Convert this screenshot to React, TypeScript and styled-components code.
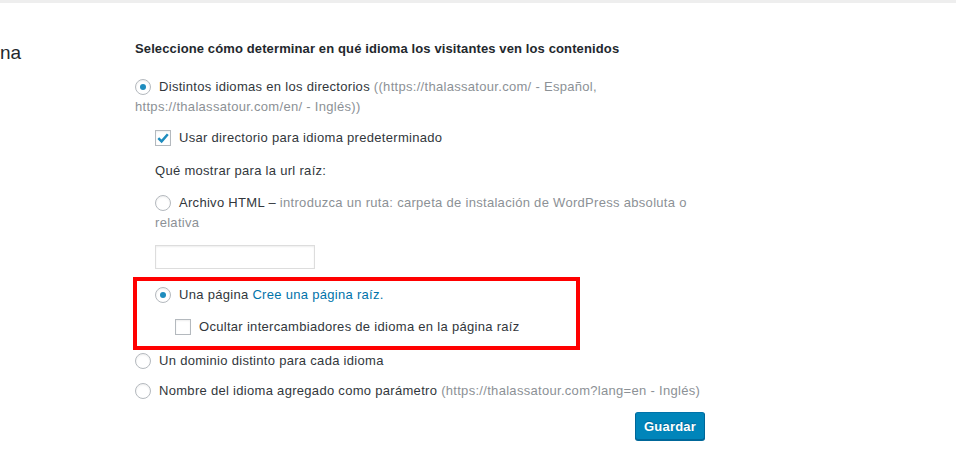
import styled, { createGlobalStyle } from "styled-components";

const GlobalStyle = createGlobalStyle`
  html, body {
    margin: 0;
    padding: 0;
    background: #ffffff;
  }
  body {
    font-family: "Liberation Sans", Arial, sans-serif;
    font-size: 13px;
    letter-spacing: 0.3px;
    color: #32373c;
  }
`;

const Page = styled.div`
  width: 956px;
  height: 472px;
  overflow: hidden;
  border-top: 3px solid #eeeeee;
  box-sizing: border-box;
`;

const FormRow = styled.div`
  display: grid;
  grid-template-columns: 135px 570px;
  padding-top: 36px;
`;

const RowLabel = styled.div`
  font-size: 19px;
  line-height: 24px;
  letter-spacing: 0;
  color: #23282d;
  margin-top: 2px;
`;

const Fieldset = styled.div`
  display: flex;
  flex-direction: column;
`;

const Legend = styled.div`
  font-weight: bold;
  line-height: 20px;
  letter-spacing: 0.12px;
  color: #23282d;
  white-space: nowrap;
`;

const Option = styled.label<{ $indent?: number; $gap?: number }>`
  display: flex;
  align-items: flex-start;
  gap: 8px;
  line-height: 20px;
  margin-left: ${(p) => p.$indent ?? 0}px;
  margin-top: ${(p) => p.$gap ?? 0}px;
  white-space: nowrap;
`;

const OptionText = styled.span`
  white-space: nowrap;
`;

const Wrapped = styled.span`
  display: block;
  margin-left: -24px;
`;

const Hint = styled.span`
  color: #8c9196;
`;

const Link = styled.a`
  color: #0073aa;
  text-decoration: none;
`;

const Radio = styled.span<{ $checked?: boolean }>`
  flex: none;
  position: relative;
  width: 16px;
  height: 16px;
  margin-top: 2px;
  box-sizing: border-box;
  border: 1px solid #b4b9be;
  border-radius: 50%;
  background: #ffffff;
  box-shadow: inset 0 1px 2px rgba(0, 0, 0, 0.07);

  &::after {
    content: "";
    display: ${(p) => (p.$checked ? "block" : "none")};
    position: absolute;
    left: 4px;
    top: 4px;
    width: 6px;
    height: 6px;
    border-radius: 50%;
    background: #1e8cbe;
  }
`;

const Checkbox = styled.span`
  flex: none;
  display: flex;
  align-items: center;
  justify-content: center;
  width: 16px;
  height: 16px;
  margin-top: 2px;
  box-sizing: border-box;
  border: 1px solid #b4b9be;
  background: #ffffff;
  box-shadow: inset 0 1px 2px rgba(0, 0, 0, 0.07);
`;

const Note = styled.div<{ $gap: number }>`
  margin: ${(p) => p.$gap}px 0 0 20px;
  line-height: 20px;
  color: #32373c;
`;

const TextInput = styled.input`
  width: 160px;
  height: 24px;
  margin: 12px 0 0 20px;
  box-sizing: border-box;
  border: 1px solid #dddddd;
  box-shadow: inset 0 1px 2px rgba(0, 0, 0, 0.07);
  outline: none;
`;

const Highlight = styled.div`
  width: 447px;
  margin: 8px 0 0 -2px;
  box-sizing: border-box;
  border: 4px solid #ff0000;
  padding: 4px 0 9px 18px;
`;

const Actions = styled.div`
  display: flex;
  justify-content: flex-end;
  margin-top: 11px;
`;

const PrimaryButton = styled.button`
  width: 70px;
  height: 28px;
  padding: 0;
  font-family: "Liberation Sans", Arial, sans-serif;
  font-size: 13px;
  font-weight: bold;
  letter-spacing: 0.2px;
  color: #ffffff;
  background: #0085ba;
  border: 1px solid;
  border-color: #0073aa #006799 #006799;
  border-radius: 3px;
  box-shadow: 0 1px 0 #006799;
  text-shadow: 0 -1px 1px #006799;
`;

function Check() {
  return (
    <svg width="14" height="14" viewBox="0 0 14 14">
      <path
        d="M2.3 7.2 L5.6 10.4 L11.8 3.2"
        fill="none"
        stroke="#1e8cbe"
        strokeWidth="2.5"
      />
    </svg>
  );
}

export default function App() {
  return (
    <>
      <GlobalStyle />
      <Page>
        <FormRow>
          <RowLabel>na</RowLabel>
          <Fieldset>
            <Legend>
              Seleccione cómo determinar en qué idioma los visitantes ven los
              contenidos
            </Legend>

            <Option $gap={18}>
              <Radio $checked />
              <OptionText>
                Distintos idiomas en los directorios{" "}
                <Hint>((https://thalassatour.com/ - Español,</Hint>
                <Wrapped>
                  <Hint>https://thalassatour.com/en/ - Inglés))</Hint>
                </Wrapped>
              </OptionText>
            </Option>

            <Option $indent={20} $gap={11}>
              <Checkbox>
                <Check />
              </Checkbox>
              <OptionText>Usar directorio para idioma predeterminado</OptionText>
            </Option>

            <Note $gap={13}>Qué mostrar para la url raíz:</Note>

            <Option $indent={20} $gap={12}>
              <Radio />
              <OptionText>
                Archivo HTML –{" "}
                <Hint>
                  introduzca un ruta: carpeta de instalación de WordPress
                  absoluta o
                </Hint>
                <Wrapped>
                  <Hint>relativa</Hint>
                </Wrapped>
              </OptionText>
            </Option>

            <TextInput type="text" />

            <Highlight>
              <Option>
                <Radio $checked />
                <OptionText>
                  Una página <Link href="#">Cree una página raíz.</Link>
                </OptionText>
              </Option>
              <Option $indent={20} $gap={12}>
                <Checkbox />
                <OptionText>
                  Ocultar intercambiadores de idioma en la página raíz
                </OptionText>
              </Option>
            </Highlight>

            <Option $gap={1}>
              <Radio />
              <OptionText>Un dominio distinto para cada idioma</OptionText>
            </Option>

            <Option $gap={10}>
              <Radio />
              <OptionText>
                Nombre del idioma agregado como parámetro{" "}
                <Hint>(https://thalassatour.com?lang=en - Inglés)</Hint>
              </OptionText>
            </Option>

            <Actions>
              <PrimaryButton>Guardar</PrimaryButton>
            </Actions>
          </Fieldset>
        </FormRow>
      </Page>
    </>
  );
}
